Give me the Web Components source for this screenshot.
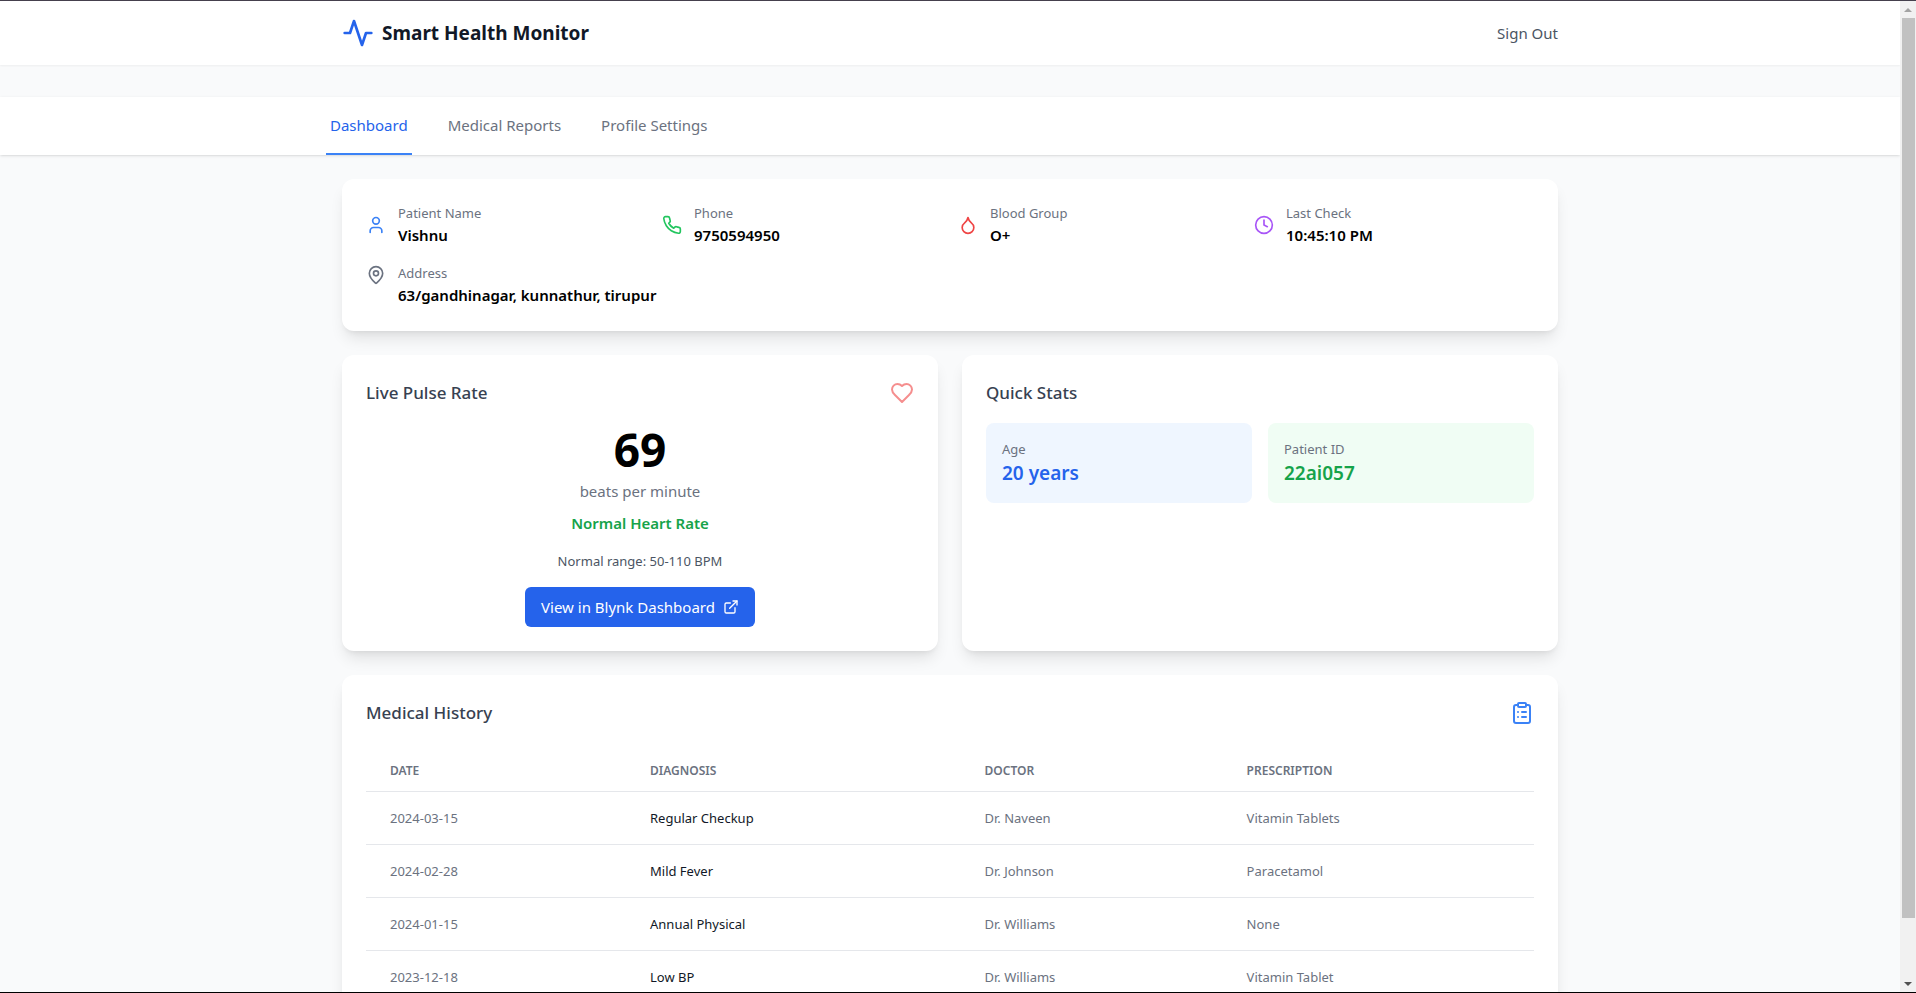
<!DOCTYPE html>
<html lang="en">
<head>
<meta charset="utf-8">
<meta name="viewport" content="width=device-width, initial-scale=1">
<title>Smart Health Monitor</title>
<style>
  :root {
    --blue-500: #3b82f6; --blue-600: #2563eb; --blue-50: #eff6ff;
    --green-500: #22c55e; --green-600: #16a34a; --green-50: #f0fdf4;
    --red-500: #ef4444; --purple-500: #a855f7;
    --gray-50: #f9fafb; --gray-200: #e5e7eb; --gray-500: #6b7280;
    --gray-600: #4b5563; --gray-700: #374151; --gray-900: #111827;
  }
  body {
    margin: 0;
    font: 400 15px/24px "Noto Sans", "Open Sans", sans-serif;
    color: #000;
    background: var(--gray-50);
  }
</style>
</head>
<body>
<app-window>
  <app-header slot="page" name="Smart Health Monitor"></app-header>
  <tab-bar slot="page">
    <a href="#dashboard" aria-current="page">Dashboard</a>
    <a href="#reports">Medical Reports</a>
    <a href="#profile">Profile Settings</a>
  </tab-bar>
  <health-dashboard slot="page"></health-dashboard>
</app-window>

<script>
const ICONS = {
  activity: '<path d="M22 12h-4l-3 9L9 3l-3 9H2"/>',
  user: '<path d="M19 21v-2a4 4 0 0 0-4-4H9a4 4 0 0 0-4 4v2"/><circle cx="12" cy="7" r="4"/>',
  phone: '<path d="M22 16.92v3a2 2 0 0 1-2.18 2 19.79 19.79 0 0 1-8.63-3.07 19.5 19.5 0 0 1-6-6 19.79 19.79 0 0 1-3.07-8.67A2 2 0 0 1 4.11 2h3a2 2 0 0 1 2 1.72 12.84 12.84 0 0 0 .7 2.81 2 2 0 0 1-.45 2.11L8.09 9.91a16 16 0 0 0 6 6l1.27-1.27a2 2 0 0 1 2.11-.45 12.84 12.84 0 0 0 2.81.7A2 2 0 0 1 22 16.92z"/>',
  droplet: '<path d="M12 22a7 7 0 0 0 7-7c0-2-1-3.9-3-5.5s-3.5-4-4-6.5c-.5 2.5-2 4.9-4 6.5C6 11.1 5 13 5 15a7 7 0 0 0 7 7z"/>',
  clock: '<circle cx="12" cy="12" r="10"/><path d="M12 6v6l4 2"/>',
  pin: '<path d="M20 10c0 4.993-5.539 10.193-7.399 11.799a1 1 0 0 1-1.202 0C9.539 20.193 4 14.993 4 10a8 8 0 0 1 16 0"/><circle cx="12" cy="10" r="3"/>',
  heart: '<path d="M19 14c1.49-1.46 3-3.21 3-5.5A5.5 5.5 0 0 0 16.5 3c-1.76 0-3 .5-4.5 2-1.5-1.5-2.74-2-4.5-2A5.5 5.5 0 0 0 2 8.5c0 2.3 1.5 4.05 3 5.5l7 7Z"/>',
  external: '<path d="M15 3h6v6"/><path d="M10 14 21 3"/><path d="M18 13v6a2 2 0 0 1-2 2H5a2 2 0 0 1-2-2V8a2 2 0 0 1 2-2h6"/>',
  clipboard: '<rect width="8" height="4" x="8" y="2" rx="1" ry="1"/><path d="M16 4h2a2 2 0 0 1 2 2v14a2 2 0 0 1-2 2H6a2 2 0 0 1-2-2V6a2 2 0 0 1 2-2h2"/><path d="M12 11h4"/><path d="M12 16h4"/><path d="M8 11h.01"/><path d="M8 16h.01"/>'
};

class BaseElement extends HTMLElement {
  constructor() {
    super();
    this.attachShadow({ mode: 'open' });
  }
  connectedCallback() {
    this.shadowRoot.innerHTML = this.render();
    this.ready();
  }
  ready() {}
}

customElements.define('line-icon', class extends BaseElement {
  render() {
    return `<style>
      :host { display: block; flex: none; width: 20px; height: 20px; }
      svg { display: block; width: 100%; height: 100%; }
    </style>
    <svg viewBox="0 0 24 24" fill="none" stroke="currentColor" stroke-width="2" stroke-linecap="round" stroke-linejoin="round" aria-hidden="true">${ICONS[this.getAttribute('name')]}</svg>`;
  }
});

/* Frame of the browser view: scrolling page on the left, scroll bar on the right. */
customElements.define('app-window', class extends BaseElement {
  render() {
    return `<style>
      :host { display: grid; grid-template-columns: minmax(0, 1fr) 16px; box-sizing: border-box; height: 100vh;
        border-top: 1px solid #45404d; border-bottom: 1px solid #000; }
      .view { overflow-y: auto; scrollbar-width: none; }
    </style>
    <div class="view"><slot name="page"></slot></div>
    <scroll-rail></scroll-rail>`;
  }
  ready() {
    const view = this.shadowRoot.querySelector('.view');
    this.shadowRoot.querySelector('scroll-rail').addEventListener('step', e => view.scrollBy(0, e.detail));
  }
});

customElements.define('scroll-rail', class extends BaseElement {
  render() {
    return `<style>
      :host { display: flex; flex-direction: column; background: #f1f1f1; }
      button { display: grid; place-items: center; height: 17px; padding: 0; border: 0; background: none; color: #a3a3a3; }
      button:last-child { color: #505050; }
      .track { flex: 1; padding: 0 1px 0 2px; }
      .thumb { height: 94%; background: #c1c1c1; }
      svg { display: block; }
    </style>
    <button aria-label="Scroll up"><svg width="8" height="4" viewBox="0 0 8 4"><path d="M4 0 8 4H0z" fill="currentColor"/></svg></button>
    <div class="track"><div class="thumb"></div></div>
    <button aria-label="Scroll down"><svg width="8" height="4" viewBox="0 0 8 4"><path d="M0 0h8L4 4z" fill="currentColor"/></svg></button>`;
  }
  ready() {
    const [up, down] = this.shadowRoot.querySelectorAll('button');
    const step = d => this.dispatchEvent(new CustomEvent('step', { detail: d }));
    up.addEventListener('click', () => step(-40));
    down.addEventListener('click', () => step(40));
  }
});

customElements.define('app-header', class extends BaseElement {
  render() {
    return `<style>
      :host { display: block; background: #fff; box-shadow: 0 1px 2px rgb(0 0 0 / .05); }
      .bar { display: flex; align-items: center; justify-content: space-between; box-sizing: border-box;
        max-width: 1280px; height: 64px; margin: 0 auto; padding: 0 32px; }
      .brand { display: flex; align-items: center; gap: 8px; }
      line-icon { width: 32px; height: 32px; color: var(--blue-600); }
      h1 { margin: 0; font-size: 19px; line-height: 28px; font-weight: 700; color: var(--gray-900); }
      button { padding: 0; border: 0; background: none; font: inherit; color: var(--gray-600); cursor: pointer; }
    </style>
    <header class="bar">
      <div class="brand"><line-icon name="activity"></line-icon><h1>${this.getAttribute('name')}</h1></div>
      <button type="button">Sign Out</button>
    </header>`;
  }
});

customElements.define('tab-bar', class extends BaseElement {
  render() {
    return `<style>
      :host { display: block; margin-top: 32px; background: #fff;
        box-shadow: 0 1px 3px rgb(0 0 0 / .1), 0 1px 2px -1px rgb(0 0 0 / .1); }
      nav { display: flex; gap: 32px; box-sizing: border-box; max-width: 1280px; margin: 0 auto; padding: 0 16px; }
      ::slotted(a) { padding: 16px 4px; border-bottom: 2px solid transparent; color: var(--gray-500); text-decoration: none; }
      ::slotted(a[aria-current]) { border-color: var(--blue-500); color: var(--blue-600); }
    </style>
    <nav><slot></slot></nav>`;
  }
});

customElements.define('info-card', class extends BaseElement {
  render() {
    const title = this.getAttribute('heading');
    return `<style>
      :host { display: block; box-sizing: border-box; padding: 24px; border-radius: 12px; background: #fff;
        box-shadow: 0 10px 15px -3px rgb(0 0 0 / .1), 0 4px 6px -4px rgb(0 0 0 / .1); }
      .head { display: flex; align-items: center; justify-content: space-between; }
      h2 { margin: 0; font-size: 17px; line-height: 28px; font-weight: 500; color: var(--gray-700); }
    </style>
    ${title ? `<div class="head"><h2>${title}</h2><slot name="icon"></slot></div>` : ''}
    <slot></slot>`;
  }
});

customElements.define('patient-field', class extends BaseElement {
  render() {
    return `<style>
      :host { display: flex; align-items: center; gap: 12px; }
      :host([top]) { align-items: flex-start; }
      :host([top]) line-icon { padding-top: 2px; }
      .label { font-size: 13px; line-height: 20px; color: var(--gray-500); }
      .value { font-weight: 600; }
    </style>
    <line-icon name="${this.getAttribute('icon')}" style="color: var(--${this.getAttribute('tone')}-500)"></line-icon>
    <div><div class="label">${this.getAttribute('label')}</div><div class="value"><slot></slot></div></div>`;
  }
});

customElements.define('pulse-reading', class extends BaseElement {
  render() {
    return `<style>
      :host { display: flex; flex-direction: column; align-items: center; margin-top: 16px; }
      .rate { font-size: 46px; line-height: 52px; font-weight: 700; }
      .unit { margin-top: 4px; color: var(--gray-500); }
      .state { margin-top: 8px; font-weight: 600; color: var(--green-600); }
      .range { margin-top: 16px; font-size: 13px; line-height: 20px; color: var(--gray-600); }
      a { display: flex; align-items: center; gap: 8px; margin-top: 16px; padding: 8px 16px; border-radius: 6px;
        background: var(--blue-600); color: #fff; text-decoration: none; }
      line-icon { width: 16px; height: 16px; }
    </style>
    <div class="rate">69</div>
    <div class="unit">beats per minute</div>
    <div class="state">Normal Heart Rate</div>
    <div class="range">Normal range: 50-110 BPM</div>
    <a href="#blynk">View in Blynk Dashboard<line-icon name="external"></line-icon></a>`;
  }
});

customElements.define('stat-tile', class extends BaseElement {
  render() {
    const tone = this.getAttribute('tone');
    return `<style>
      :host { display: block; padding: 16px; border-radius: 8px; background: var(--${tone}-50); }
      .label { font-size: 13px; line-height: 20px; color: var(--gray-500); }
      .value { font-size: 19px; line-height: 28px; font-weight: 600; color: var(--${tone}-600); }
    </style>
    <div class="label">${this.getAttribute('label')}</div>
    <div class="value"><slot></slot></div>`;
  }
});

const HISTORY = [
  ['2024-03-15', 'Regular Checkup', 'Dr. Naveen', 'Vitamin Tablets'],
  ['2024-02-28', 'Mild Fever', 'Dr. Johnson', 'Paracetamol'],
  ['2024-01-15', 'Annual Physical', 'Dr. Williams', 'None'],
  ['2023-12-18', 'Low BP', 'Dr. Williams', 'Vitamin Tablet']
];

customElements.define('history-table', class extends BaseElement {
  render() {
    return `<style>
      :host { display: block; margin-top: 24px; }
      table { width: 100%; border-collapse: collapse; text-align: left; }
      th { padding: 12px 24px; font-size: 12px; line-height: 16px; font-weight: 600; color: var(--gray-500); }
      th:first-child { box-sizing: border-box; width: 260px; }
      td { padding: 16px 24px; border-top: 1px solid var(--gray-200); font-size: 13px; line-height: 20px;
        color: var(--gray-500); white-space: nowrap; }
      td:nth-child(2) { color: var(--gray-900); }
    </style>
    <table>
      <thead><tr><th>DATE</th><th>DIAGNOSIS</th><th>DOCTOR</th><th>PRESCRIPTION</th></tr></thead>
      <tbody>${HISTORY.map(r => `<tr>${r.map(c => `<td>${c}</td>`).join('')}</tr>`).join('')}</tbody>
    </table>`;
  }
});

customElements.define('health-dashboard', class extends BaseElement {
  render() {
    return `<style>
      :host { display: block; }
      main { display: grid; grid-template-columns: repeat(2, minmax(0, 1fr)); gap: 24px; box-sizing: border-box;
        max-width: 1280px; margin: 0 auto; padding: 24px 32px 32px; }
      .wide { grid-column: 1 / -1; }
      .fields { display: grid; grid-template-columns: repeat(4, minmax(0, 1fr)); gap: 16px; }
      .address { grid-column: 1 / -1; }
      .tiles { display: grid; grid-template-columns: repeat(2, minmax(0, 1fr)); gap: 16px; margin-top: 16px; }
      line-icon { width: 24px; height: 24px; }
      .heart { color: var(--red-500); opacity: .6; }
      .list { color: var(--blue-500); }
    </style>
    <main>
      <info-card class="wide">
        <div class="fields">
          <patient-field icon="user" tone="blue" label="Patient Name">Vishnu</patient-field>
          <patient-field icon="phone" tone="green" label="Phone">9750594950</patient-field>
          <patient-field icon="droplet" tone="red" label="Blood Group">O+</patient-field>
          <patient-field icon="clock" tone="purple" label="Last Check">10:45:10 PM</patient-field>
          <patient-field class="address" top icon="pin" tone="gray" label="Address">63/gandhinagar, kunnathur, tirupur</patient-field>
        </div>
      </info-card>
      <info-card heading="Live Pulse Rate">
        <line-icon slot="icon" class="heart" name="heart"></line-icon>
        <pulse-reading></pulse-reading>
      </info-card>
      <info-card heading="Quick Stats">
        <div class="tiles">
          <stat-tile tone="blue" label="Age">20 years</stat-tile>
          <stat-tile tone="green" label="Patient ID">22ai057</stat-tile>
        </div>
      </info-card>
      <info-card class="wide" heading="Medical History">
        <line-icon slot="icon" class="list" name="clipboard"></line-icon>
        <history-table></history-table>
      </info-card>
    </main>`;
  }
});
</script>
</body>
</html>
